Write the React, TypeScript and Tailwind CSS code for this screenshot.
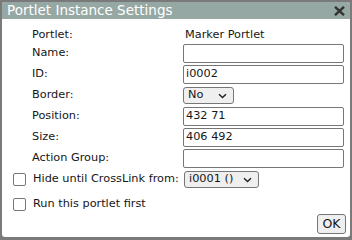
import React from "react";

const font = { fontFamily: '"DejaVu Sans", Verdana, sans-serif' };

function TextRow({ label, value }: { label: string; value?: string }) {
  return (
    <div className="flex items-center h-[19px]">
      <span className="w-[151px]">{label}</span>
      <div className="w-[161px] h-[19px] border border-[#767676] rounded-[2px] bg-white px-[2px] flex items-center">
        {value}
      </div>
    </div>
  );
}

function Chevron() {
  return (
    <svg width="9" height="6" viewBox="0 0 9 6" className="ml-auto">
      <path d="M1 1.2 L4.5 4.6 L8 1.2" fill="none" stroke="#222" strokeWidth="1.4" />
    </svg>
  );
}

function SelectBox({ value, width }: { value: string; width: string }) {
  return (
    <div
      className={`${width} h-[17px] border border-[#767676] rounded-[3px] bg-[#efefef] pl-[4px] pr-[6px] flex items-center`}
    >
      <span>{value}</span>
      <Chevron />
    </div>
  );
}

function Checkbox() {
  return <span className="w-[13px] h-[13px] border border-[#767676] rounded-[2px] bg-white shrink-0" />;
}

export default function App() {
  return (
    <div className="w-[352px] h-[240px] bg-[#7a7a7a] pt-[2px] pl-[2px] pr-[2px] pb-[3px]" style={font}>
      <div className="h-full bg-white rounded-[3px] overflow-hidden flex flex-col">
        {/* title bar */}
        <div className="h-[18px] bg-[#96a8a3] flex items-center pl-[5px] pr-[5px]">
          <span className="text-white text-[13.5px] leading-none">Portlet Instance Settings</span>
          <svg width="11" height="10" viewBox="0 0 11 10" className="ml-auto">
            <path d="M1 0.8 L10 9.2 M10 0.8 L1 9.2" stroke="#333" strokeWidth="2.4" />
          </svg>
        </div>

        <div className="flex flex-col text-[11.3px] text-[#161616] pl-[30px] pr-[4px] pt-[8px]">
          <div className="flex items-center h-[16px] mb-[1px]">
            <span className="w-[151px]">Portlet:</span>
            <span className="pl-[2px]">Marker Portlet</span>
          </div>
          <div className="flex flex-col gap-[2px]">
            <TextRow label="Name:" />
            <TextRow label="ID:" value="i0002" />
            <div className="flex items-center h-[19px]">
              <span className="w-[151px]">Border:</span>
              <SelectBox value="No" width="w-[51px]" />
            </div>
            <TextRow label="Position:" value="432 71" />
            <TextRow label="Size:" value="406 492" />
            <TextRow label="Action Group:" />
          </div>
        </div>

        <div className="flex flex-col text-[11.3px] text-[#161616] pl-[11px] pr-[4px] mt-[2px]">
          <div className="flex items-center h-[19px]">
            <Checkbox />
            <span className="ml-[7px] w-[151px] whitespace-nowrap">Hide until CrossLink from:</span>
            <SelectBox value="i0001 ()" width="w-[75px]" />
          </div>
          <div className="flex items-center h-[19px] mt-[6px]">
            <Checkbox />
            <span className="ml-[7px]">Run this portlet first</span>
          </div>
        </div>

        <div className="flex justify-end pr-[4px] mt-auto mb-[3px]">
          <div className="w-[29px] h-[20px] border border-[#767676] rounded-[3px] bg-[#efefef] flex items-center justify-center text-[12.5px] text-[#161616]">
            OK
          </div>
        </div>
      </div>
    </div>
  );
}
